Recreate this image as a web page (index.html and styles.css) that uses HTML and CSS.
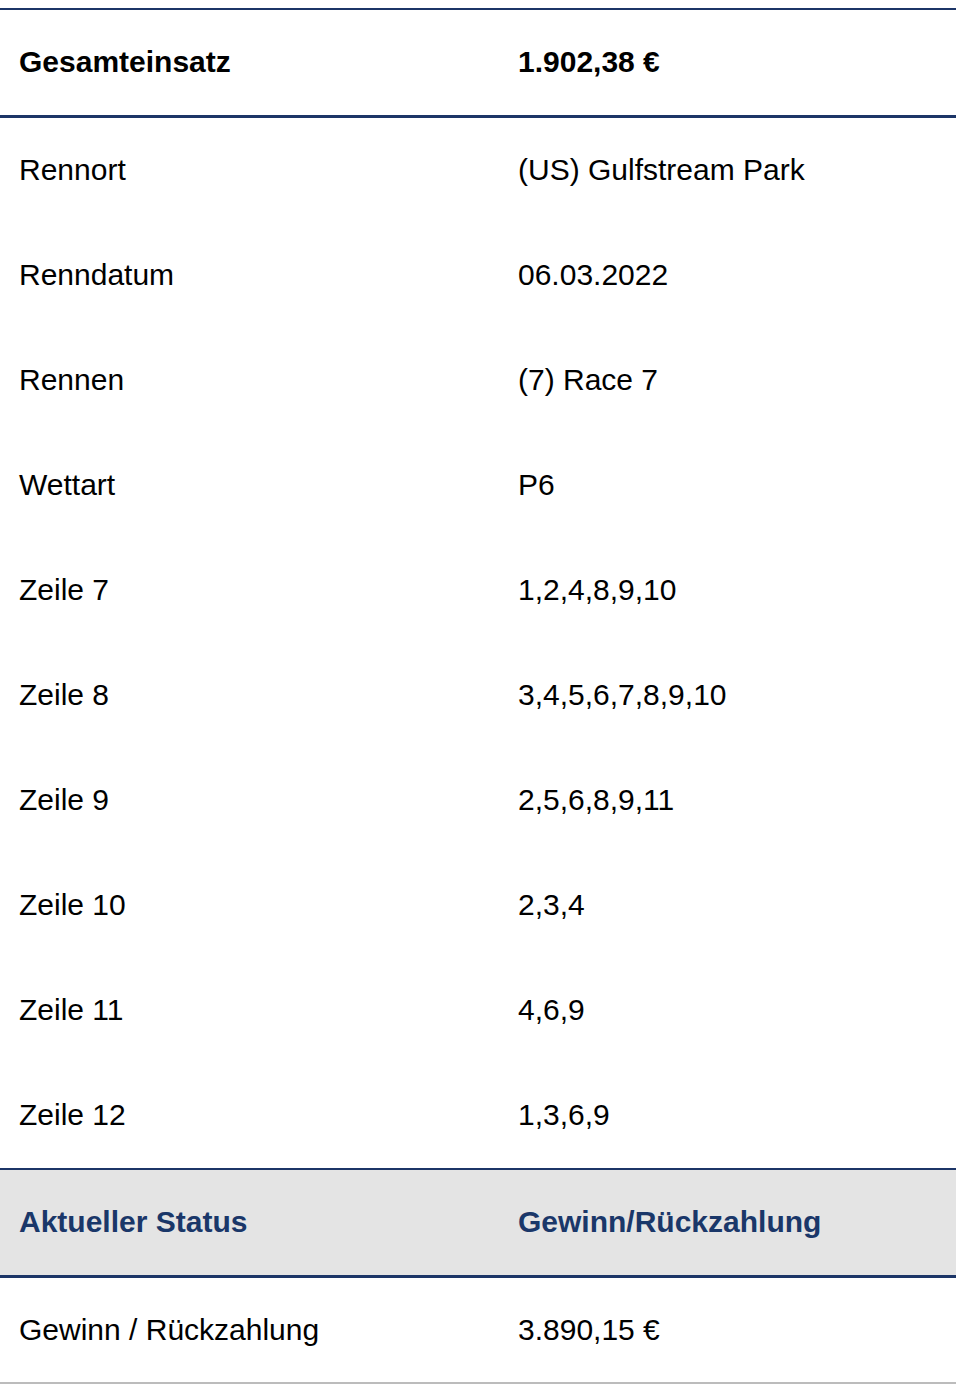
FILE: index.html
```html
<!DOCTYPE html>
<html lang="de">
<head>
<meta charset="utf-8">
<link rel="stylesheet" href="styles.css">
</head>
<body>
<div class="table">
  <div class="row head">
    <div class="cell">Gesamteinsatz</div>
    <div class="cell">1.902,38 €</div>
  </div>
  <div class="body">
    <div class="row"><div class="cell">Rennort</div><div class="cell">(US) Gulfstream Park</div></div>
    <div class="row"><div class="cell">Renndatum</div><div class="cell">06.03.2022</div></div>
    <div class="row"><div class="cell">Rennen</div><div class="cell">(7) Race 7</div></div>
    <div class="row"><div class="cell">Wettart</div><div class="cell">P6</div></div>
    <div class="row"><div class="cell">Zeile 7</div><div class="cell">1,2,4,8,9,10</div></div>
    <div class="row"><div class="cell">Zeile 8</div><div class="cell">3,4,5,6,7,8,9,10</div></div>
    <div class="row"><div class="cell">Zeile 9</div><div class="cell">2,5,6,8,9,11</div></div>
    <div class="row"><div class="cell">Zeile 10</div><div class="cell">2,3,4</div></div>
    <div class="row"><div class="cell">Zeile 11</div><div class="cell">4,6,9</div></div>
    <div class="row"><div class="cell">Zeile 12</div><div class="cell">1,3,6,9</div></div>
  </div>
  <div class="row status">
    <div class="cell">Aktueller Status</div>
    <div class="cell">Gewinn/Rückzahlung</div>
  </div>
  <div class="row last">
    <div class="cell">Gewinn / Rückzahlung</div>
    <div class="cell">3.890,15 €</div>
  </div>
</div>
</body>
</html>
```

FILE: styles.css
```css
html, body {
  margin: 0;
  padding: 0;
  background: #ffffff;
}
body {
  padding-top: 8px;
  font-family: "Liberation Sans", Arial, sans-serif;
  font-size: 30px;
  color: #000000;
}
.table {
  width: 956px;
}
.row {
  display: grid;
  grid-template-columns: 499px 1fr;
  height: 105px;
  align-items: center;
  padding: 0 20px 1px 19px;
  box-sizing: border-box;
}
.row .cell {
  white-space: nowrap;
  line-height: 1;
}
.head {
  border-top: 2px solid #1c3567;
  border-bottom: 3px solid #1c3567;
  height: 110px;
  font-weight: bold;
}
.body {
  border-bottom: 2px solid #1c3567;
}
.status {
  background: #e4e4e4;
  color: #1a3769;
  font-weight: bold;
  border-bottom: 3px solid #1c3567;
  height: 108px;
}
.last {
  border-bottom: 2px solid #bcbcbc;
  height: 106px;
}
```
